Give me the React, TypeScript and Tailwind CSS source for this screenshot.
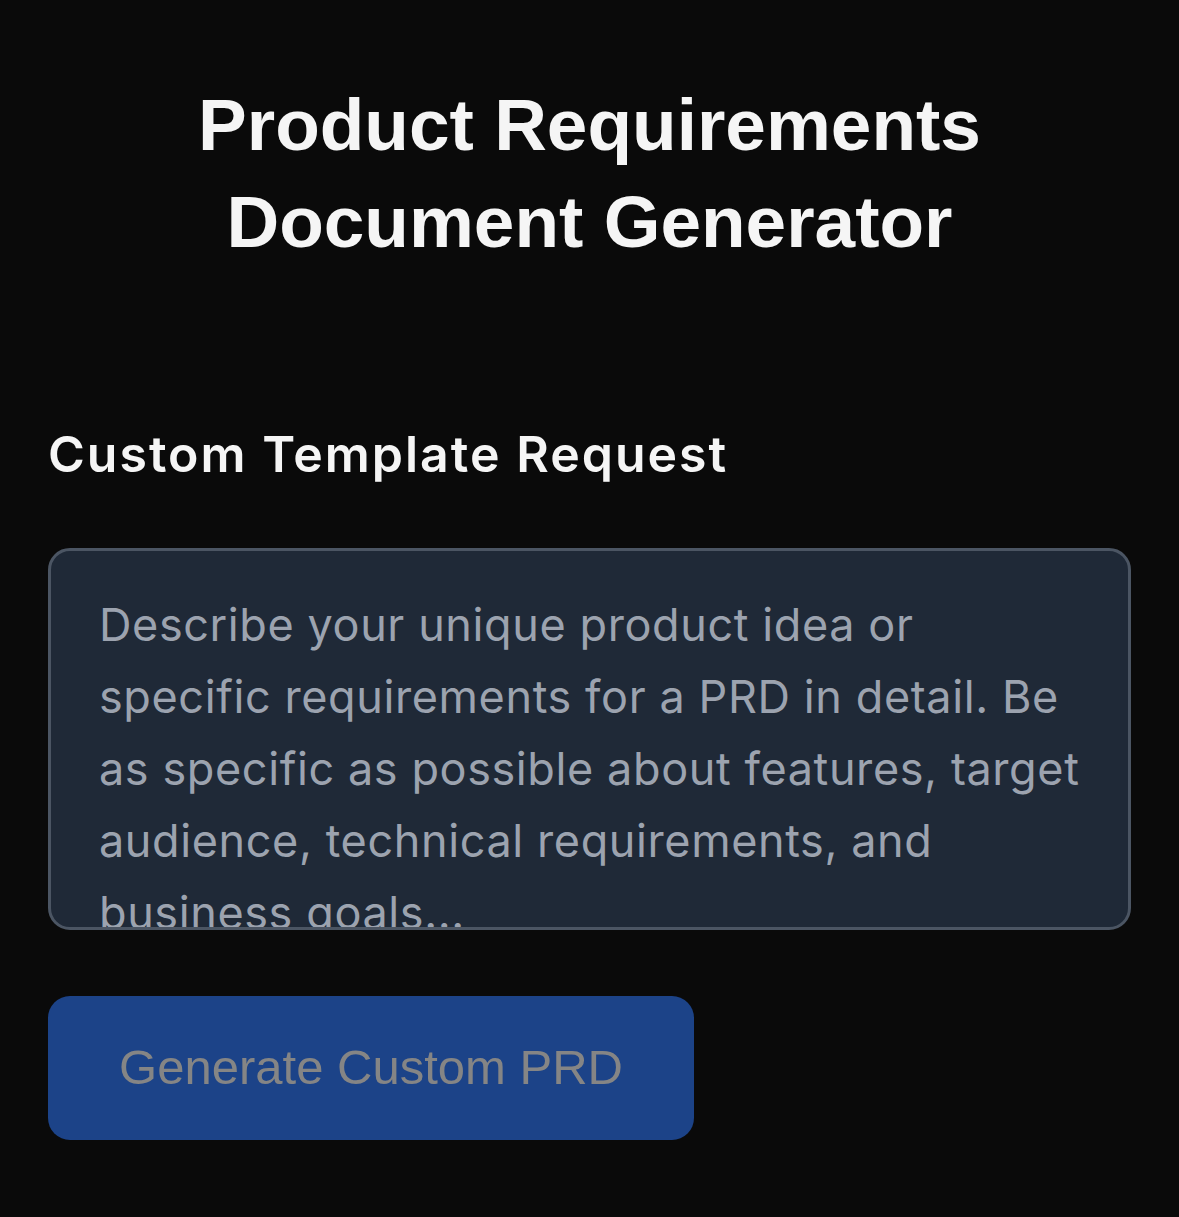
import React from "react";

export default function App() {
  const lines = [
    "Describe your unique product idea or",
    "specific requirements for a PRD in detail. Be",
    "as specific as possible about features, target",
    "audience, technical requirements, and",
    "business goals...",
  ];
  return (
    <div className="min-h-[1217px] w-full bg-[#0a0a0a] px-[48px] pt-[76px] font-['Inter','Noto_Sans',sans-serif]">
      <h1 className="text-center font-['Liberation_Sans',Arial,sans-serif] text-[73px] font-bold leading-[97px] text-[#f5f5f5]">
        Product Requirements
        <br />
        Document Generator
      </h1>
      <div className="mt-[146px]">
        <h2 className="text-[50px] font-semibold leading-[77px] tracking-[2px] text-[#f5f5f5]">
          Custom Template Request
        </h2>
        <div className="mt-[55px] h-[382px] w-full overflow-hidden rounded-[22px] border-[3px] border-[#4b5563] bg-[#1f2937] px-[48px] pt-[38px]">
          <div className="text-[45px] leading-[72px] tracking-[0.6px] text-[#9ca3af]">
            {lines.map((l) => (
              <div key={l} className="whitespace-nowrap">
                {l}
              </div>
            ))}
          </div>
        </div>
        <button
          type="button"
          disabled
          className="mt-[66px] flex h-[144px] w-[646px] items-center justify-center rounded-[22px] bg-[#1c4388] font-['Liberation_Sans',Arial,sans-serif] text-[49px] text-[#858585]"
        >
          Generate Custom PRD
        </button>
      </div>
    </div>
  );
}
